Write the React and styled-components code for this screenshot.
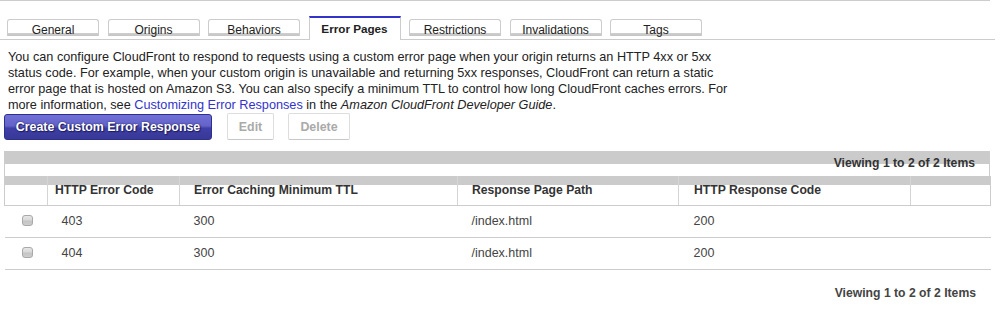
import React from "react";
import styled, { createGlobalStyle, css } from "styled-components";

const GlobalStyle = createGlobalStyle`
  html, body { margin: 0; padding: 0; background: #fff; }
  body { font-family: "Liberation Sans", Arial, sans-serif; font-size: 13px; color: #222; }
  * { box-sizing: border-box; }
`;

const Page = styled.div`
  width: 990px;
  border-top: 1px solid #ccc;
`;

const TabBar = styled.div`
  display: flex;
  align-items: flex-end;
  gap: 8.5px;
  width: 995px;
  padding: 15px 0 0 7px;
  border-bottom: 1px solid #ccc;
`;

const Tab = styled.div`
  width: 92px;
  text-align: center;
  font-size: 12px;
  line-height: 15px;
  color: #222;
  border: 1px solid #ccc;
  border-radius: 3px 3px 0 0;
  ${(p) =>
    p.$active
      ? css`
          height: 24px;
          margin-bottom: -1px;
          padding-top: 3px;
          border-top: 2px solid #3333cc;
          border-bottom: none;
          border-radius: 0;
          background: #fff;
          font-size: 11.7px;
          font-weight: bold;
        `
      : css`
          height: 17px;
          margin-bottom: 3px;
          padding-top: 3px;
          border-bottom: none;
          background: linear-gradient(#fff 0, #fff 13px, #cfcfcf 13px, #c4c4c4 100%);
        `}
`;

const Intro = styled.p`
  margin: 9px 0 0 8px;
  max-width: 725px;
  line-height: 16px;
  font-size: 12.7px;
  color: #222;
`;

const Link = styled.a`
  color: #3333cc;
  text-decoration: none;
`;

const ButtonRow = styled.div`
  display: flex;
  align-items: center;
  padding-left: 4px;
`;

const PrimaryButton = styled.button`
  width: 208px;
  height: 26px;
  padding: 0;
  border: 1px solid #2e2e8e;
  border-radius: 3px;
  background: linear-gradient(#7070d6 0, #6363c8 45%, #3f3fa8 55%, #383896 100%);
  color: #fff;
  font-family: "Liberation Sans", Arial, sans-serif;
  font-size: 12.4px;
  font-weight: bold;
  text-shadow: 0 0 2px #1c1c60, 1px 1px 1px #1c1c60;
  cursor: pointer;
`;

const GhostButton = styled.button`
  width: ${(p) => p.$w}px;
  height: 27px;
  margin-left: ${(p) => p.$gap}px;
  padding: 0;
  border: 1px solid #ddd;
  border-bottom-color: #c8c8c8;
  border-radius: 2px;
  background: #fff;
  color: #aaa;
  font-family: "Liberation Sans", Arial, sans-serif;
  font-size: 12.4px;
  font-weight: bold;
`;

const TableWrap = styled.div`
  width: 986px;
  margin: 11px 0 0 4px;
`;

const Pager = styled.div`
  height: 25px;
  line-height: 25px;
  padding-right: 14px;
  text-align: right;
  font-size: 12.2px;
  font-weight: bold;
  color: #333;
  border-left: 1px solid #ccc;
  border-right: 1px solid #ccc;
  background: linear-gradient(#cbcbcb 0, #cbcbcb 13px, #fff 13px);
`;

const Grid = styled.table`
  width: 986px;
  border-collapse: collapse;
  table-layout: fixed;
`;

const HeadCell = styled.th`
  height: 29px;
  padding: 0 0 0 ${(p) => p.$pad ?? 14}px;
  text-align: left;
  font-size: 12.2px;
  font-weight: bold;
  color: #333;
  white-space: nowrap;
  border-bottom: 1px solid #ccc;
  background: linear-gradient(#cbcbcb 0, #cbcbcb 9px, #fff 9px);
  ${(p) =>
    p.$first
      ? css`
          border-left: 1px solid #ccc;
        `
      : css`
          border-left: 1px solid #d4d4d4;
        `}
  ${(p) =>
    p.$last &&
    css`
      border-right: 1px solid #ccc;
    `}
`;

const Cell = styled.td`
  height: 32px;
  padding: 0 0 0 ${(p) => p.$pad ?? 14}px;
  font-size: 12.5px;
  color: #444;
  border-bottom: 1px solid #ccc;
  vertical-align: middle;
`;

const CheckBox = styled.span`
  display: block;
  width: 11px;
  height: 11px;
  margin-top: -1px;
  border: 1px solid #a9a9a9;
  border-radius: 3px;
  background: linear-gradient(#e6e6e6 0, #d8d8d8 45%, #c4c4c4 55%, #cdcdcd 100%);
`;

const Footer = styled.div`
  width: 986px;
  margin: 15px 0 0 4px;
  padding-right: 14px;
  line-height: 16px;
  text-align: right;
  font-size: 12.2px;
  font-weight: bold;
  color: #444;
`;

const tabs = ["General", "Origins", "Behaviors", "Error Pages", "Restrictions", "Invalidations", "Tags"];

const rows = [
  { code: "403", ttl: "300", path: "/index.html", resp: "200" },
  { code: "404", ttl: "300", path: "/index.html", resp: "200" },
];

export default function App() {
  return (
    <>
      <GlobalStyle />
      <Page>
        <TabBar>
          {tabs.map((t) => (
            <Tab key={t} $active={t === "Error Pages"}>
              {t}
            </Tab>
          ))}
        </TabBar>
        <Intro>
          You can configure CloudFront to respond to requests using a custom error page when your origin returns an HTTP 4xx or
          5xx status code. For example, when your custom origin is unavailable and returning 5xx responses, CloudFront can return
          a static error page that is hosted on Amazon S3. You can also specify a minimum TTL to control how long CloudFront
          caches errors. For more information, see <Link href="#">Customizing Error Responses</Link> in the{" "}
          <i>Amazon CloudFront Developer Guide</i>.
        </Intro>
        <ButtonRow>
          <PrimaryButton>Create Custom Error Response</PrimaryButton>
          <GhostButton $w={47} $gap={15} disabled>
            Edit
          </GhostButton>
          <GhostButton $w={62} $gap={14} disabled>
            Delete
          </GhostButton>
        </ButtonRow>
        <TableWrap>
          <Pager>Viewing 1 to 2 of 2 Items</Pager>
          <Grid>
            <colgroup>
              <col style={{ width: 43 }} />
              <col style={{ width: 132 }} />
              <col style={{ width: 278 }} />
              <col style={{ width: 221 }} />
              <col style={{ width: 232 }} />
              <col style={{ width: 80 }} />
            </colgroup>
            <thead>
              <tr>
                <HeadCell $first />
                <HeadCell $pad={7}>HTTP Error Code</HeadCell>
                <HeadCell>Error Caching Minimum TTL</HeadCell>
                <HeadCell>Response Page Path</HeadCell>
                <HeadCell $pad={15}>HTTP Response Code</HeadCell>
                <HeadCell $last />
              </tr>
            </thead>
            <tbody>
              {rows.map((r) => (
                <tr key={r.code}>
                  <Cell $pad={17}>
                    <CheckBox />
                  </Cell>
                  <Cell>{r.code}</Cell>
                  <Cell>{r.ttl}</Cell>
                  <Cell>{r.path}</Cell>
                  <Cell $pad={15}>{r.resp}</Cell>
                  <Cell />
                </tr>
              ))}
            </tbody>
          </Grid>
        </TableWrap>
        <Footer>Viewing 1 to 2 of 2 Items</Footer>
      </Page>
    </>
  );
}
